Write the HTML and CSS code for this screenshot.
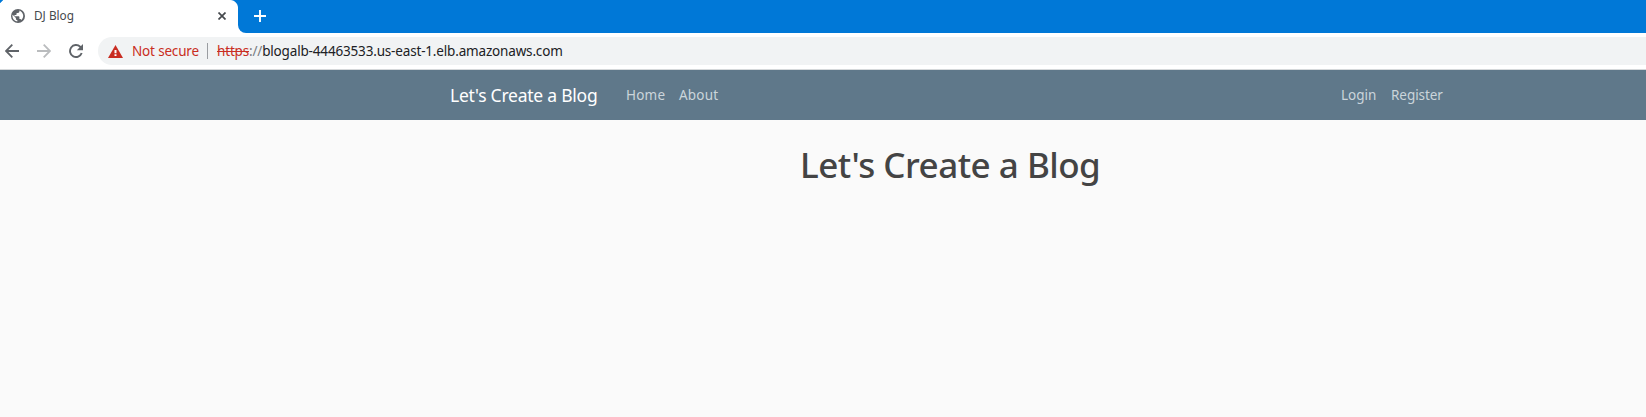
FILE: index.html
```html
<!DOCTYPE html>
<html lang="en">
<head>
<meta charset="utf-8">
<title>DJ Blog</title>
<link rel="stylesheet" href="styles.css">
</head>
<body>
<div class="tabstrip">
  <div class="tab">
    <svg class="globe" width="14" height="14" viewBox="0 0 14 14"><circle cx="7" cy="7" r="7" fill="#5f6368"/><path d="M8.400 1.600v.9c0 .8-.6 1.400-1.400 1.400H5.600v1.400c0 .4-.3.7-.7.7H3.500v1.300h4.200c.4 0 .7.3.7.7v2.100h.7c.6 0 1.100.4 1.300.9A5.600 5.600 0 0 0 8.400 1.600zM1.600 5.700 4.900 9v.7c0 .8.6 1.400 1.400 1.400v1.450A5.600 5.600 0 0 1 1.600 5.700z" fill="#fff"/></svg>
    <span class="tab-title">DJ Blog</span>
    <svg class="close" width="8" height="8" viewBox="0 0 8 8"><path d="M.5.5l7 7M7.500.5l-7 7" stroke="#45494d" stroke-width="1.700"/></svg>
  </div>
  <div class="strip-rest">
    <svg width="12" height="12" viewBox="0 0 12 12"><path d="M6 0v12M0 6h12" stroke="#fff" stroke-width="1.900"/></svg>
  </div>
</div>
<div class="toolbar">
  <svg class="tool back" width="14" height="14" viewBox="0 0 14 14"><path d="M14 7H1.400M7.300.7 1 7l6.300 6.300" fill="none" stroke="#5f6368" stroke-width="1.800"/></svg>
  <svg class="tool forward" width="14" height="14" viewBox="0 0 14 14"><path d="M0 7h12.600M6.700.7 13 7l-6.300 6.300" fill="none" stroke="#babcbe" stroke-width="1.800"/></svg>
  <svg class="tool reload" width="14" height="14" viewBox="0 0 14 14"><path d="M12.700 9A6 6 0 1 1 11.200 2.700L12.500 4" fill="none" stroke="#5f6368" stroke-width="1.900"/><path d="M14 0v6.200H7.800z" fill="#5f6368"/></svg>
  <div class="address">
    <svg class="warning" width="15" height="13" viewBox="0 0 15 13"><path d="M7.500 0 15 13H0z" fill="#c92d22"/><path d="M7.500 5v3.300M7.500 9.300v1.700" stroke="#fff" stroke-width="2"/></svg>
    <span class="insecure">Not secure</span>
    <span class="divider"></span>
    <span class="url"><span class="scheme">https</span><span class="slashes">://</span><span class="host">blogalb-44463533.us-east-1.elb.amazonaws.com</span></span>
  </div>
</div>
<nav class="navbar">
  <a class="brand">Let's Create a Blog</a>
  <a class="link home">Home</a>
  <a class="link about">About</a>
  <a class="link login">Login</a>
  <a class="link register">Register</a>
</nav>
<main class="page"><h1>Let's Create a Blog</h1></main>
</body>
</html>
```
FILE: styles.css
```css
* { box-sizing: border-box; }
body { margin: 0; height: 417px; overflow: hidden; background: #fafafa; font-family: "Noto Sans", "Open Sans", sans-serif; white-space: nowrap; }
svg { display: block; flex: none; }
.tabstrip { display: flex; height: 33px; background: #fff; }
.tab { display: flex; align-items: center; width: 238px; height: 33px; padding: 0 12px 2px 11px; background: radial-gradient(circle at 0 8px, transparent 7.500px, #0078d7 8.500px) right top / 8px 8px no-repeat, linear-gradient(135deg, #0078d7 2px, #fff 2.500px); }
.tab-title { margin: -1px 0 0 9px; font-size: 11.800px; line-height: 16px; color: #45494d; }
.close { margin-left: auto; }
.strip-rest { flex: 1; padding: 10px 0 0 16px; background: #0078d7; border-bottom-left-radius: 8px; }
.toolbar { display: flex; align-items: center; height: 37px; padding-left: 5px; background: #fff; border-bottom: 1px solid #d5d8da; }
.forward { margin-left: 18px; }
.reload { margin-left: 18px; }
.address { display: flex; align-items: center; flex: 1; height: 28px; margin-left: 15px; padding-left: 10px; background: #f1f3f4; border-radius: 14px 0 0 14px; font-size: 13.500px; line-height: 20px; }
.insecure { width: 75px; margin-left: 9px; letter-spacing: -0.17px; color: #c92d22; }
.divider { width: 1px; height: 16px; background: #9a9da1; }
.url { display: flex; margin-left: 9px; letter-spacing: -0.17px; }
.scheme { color: #c92d22; text-decoration: line-through; }
.slashes { color: #777b80; }
.host { color: #202124; }
.navbar { display: flex; align-items: center; height: 50px; padding: 0 203px 0 450px; background: #5f788a; }
.brand { width: 176px; font-size: 17.500px; line-height: 26px; letter-spacing: -0.24px; color: #fff; }
.link { font-size: 13.500px; line-height: 20px; letter-spacing: 0.2px; color: #cbd5db; }
.home { width: 53px; }
.login { width: 50px; margin-left: auto; letter-spacing: 0; }
.register { width: 52px; letter-spacing: -0.06px; }
.page { padding: 20px 0 0 800px; }
h1 { margin: 0; font-size: 35px; font-weight: 500; line-height: 49px; letter-spacing: -0.5px; color: #444; }
```
